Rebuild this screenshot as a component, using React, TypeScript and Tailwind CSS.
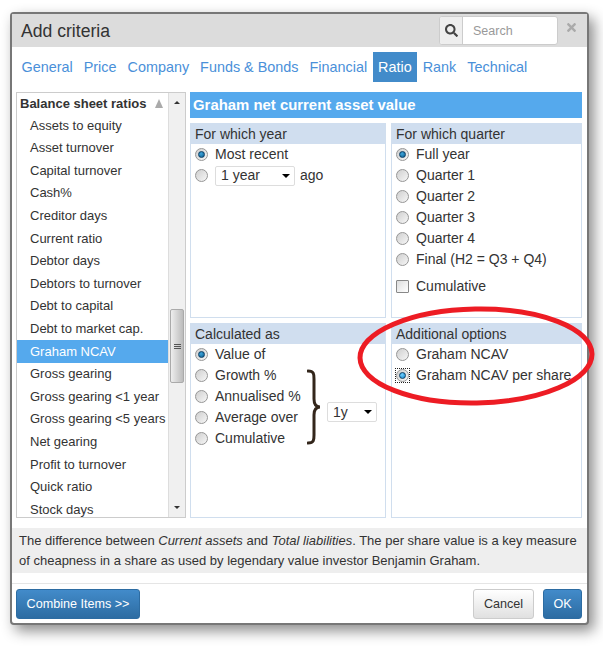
import React from "react";
import { FaSearch, FaTimes } from "react-icons/fa";

const tabs = ["General", "Price", "Company", "Funds & Bonds", "Financial", "Ratio", "Rank", "Technical"];
const items = [
  "Assets to equity",
  "Asset turnover",
  "Capital turnover",
  "Cash%",
  "Creditor days",
  "Current ratio",
  "Debtor days",
  "Debtors to turnover",
  "Debt to capital",
  "Debt to market cap.",
  "Graham NCAV",
  "Gross gearing",
  "Gross gearing <1 year",
  "Gross gearing <5 years",
  "Net gearing",
  "Profit to turnover",
  "Quick ratio",
  "Stock days",
];

const Radio = ({ on, focus }: { on?: boolean; focus?: boolean }) => (
  <span className={"flex h-[13px] w-[13px] shrink-0 " + (focus ? "outline-1 outline-dotted outline-[#222]" : "")}>
    <span className="flex h-[13px] w-[13px] items-center justify-center rounded-full border border-[#969696] bg-[linear-gradient(135deg,#cfcfcf,#f6f6f6)]">
      {on && (
        <span
          className={
            "h-[7px] w-[7px] rounded-full border border-[#0b3f66] " +
            (focus
              ? "bg-[radial-gradient(circle_at_40%_35%,#6fd0ff,#1482c8)]"
              : "bg-[radial-gradient(circle_at_40%_35%,#3fa6dc,#0a5a8c)]")
          }
        />
      )}
    </span>
  </span>
);

const Option = ({ label, on, focus }: { label: string; on?: boolean; focus?: boolean }) => (
  <div className="flex h-[21px] items-center gap-[7px] pl-[4px]">
    <Radio on={on} focus={focus} />
    <span>{label}</span>
  </div>
);

const Select = ({ label, width }: { label: string; width: string }) => (
  <div className={"flex h-[20px] items-center justify-between rounded-[2px] border border-[#ddd] bg-white pl-[5px] pr-[2px] " + width}>
    <span>{label}</span>
    <span className="mr-[2px] h-0 w-0 border-x-[4px] border-t-[4px] border-x-transparent border-t-black" />
  </div>
);

const Panel = ({ title, children }: { title: string; children: React.ReactNode }) => (
  <div className="flex h-[195px] flex-col border border-t-0 border-[#d0deee]">
    <div className="flex h-[21px] items-center bg-[#d0deef] pl-[4px] pt-[1px]">{title}</div>
    <div>{children}</div>
  </div>
);

export default function App() {
  return (
    <div className="relative h-[649px] w-[603px] overflow-hidden bg-white pl-[10px] pt-[12px] font-['Liberation_Sans',Arial,sans-serif] text-[14px] text-[#333]">
      <div className="flex h-[613px] w-[579px] flex-col rounded-[4px] border-2 border-[#777] bg-white shadow-[5px_6px_14px_rgba(0,0,0,0.45)]">
        <div className="flex h-[33px] shrink-0 items-center justify-between bg-[#dcdcdc] pl-[9px] pr-[10px]">
          <span className="pt-[1px] text-[17.6px]">Add criteria</span>
          <div className="flex items-center gap-[8px]">
            <div className="flex h-[29px] w-[119px] overflow-hidden rounded-[3px] border border-[#ccc] bg-white">
              <div className="flex w-[23px] items-center justify-center border-r border-[#ccc] bg-[#eee] text-[#444]">
                <FaSearch className="h-[13px] w-[13px]" />
              </div>
              <span className="flex items-center pl-[10px] pt-[1px] text-[12.5px] text-[#999]">Search</span>
            </div>
            <FaTimes className="mb-[7px] h-[13px] w-[11px] text-[#aaa]" />
          </div>
        </div>

        <div className="flex h-[30px] shrink-0 pl-[4px] pt-[5px] text-[#4a90d9]">
          {tabs.map((t) => (
            <span
              key={t}
              className={
                "flex h-[30px] items-center px-[5.5px] pt-[1px] text-[14.4px] " +
                (t === "Ratio" ? "bg-[#428bca] text-white" : "")
              }
            >
              {t}
            </span>
          ))}
        </div>

        <div className="mt-[15px] flex gap-[4px] pl-[4px] pr-[5px]">
          <div className="flex h-[426px] w-[170px] shrink-0 border border-[#ccc] text-[13px]">
            <div className="w-[151px] overflow-hidden">
              <div className="flex h-[21px] items-center justify-between pl-[3px] pr-[5px] font-bold">
                <span>Balance sheet ratios</span>
                <span className="h-0 w-0 border-x-[4.5px] border-b-[9px] border-x-transparent border-b-[#aaa]" />
              </div>
              {items.map((i) => (
                <div
                  key={i}
                  className={
                    "flex h-[22.62px] items-center whitespace-nowrap pl-[13px] " +
                    (i === "Graham NCAV" ? "bg-[#55a9ed] text-white" : "")
                  }
                >
                  {i}
                </div>
              ))}
            </div>
            <div className="relative flex w-[17px] flex-col items-center justify-between border-l border-[#ddd] bg-[#f0f0f0] py-[8px]">
              <span className="h-0 w-0 border-x-[3px] border-b-[3px] border-x-transparent border-b-[#333]" />
              <span className="h-0 w-0 border-x-[3px] border-t-[3px] border-x-transparent border-t-[#333]" />
              <div className="absolute left-[1px] top-[216px] flex h-[74px] w-[14px] flex-col items-center justify-center gap-[1px] rounded-[2px] border border-[#aaa] bg-[linear-gradient(90deg,#eee,#bbb)]">
                <span className="h-px w-[7px] bg-[#555]" />
                <span className="h-px w-[7px] bg-[#555]" />
                <span className="h-px w-[7px] bg-[#555]" />
              </div>
            </div>
          </div>

          <div className="flex w-[392px] flex-col">
            <div className="flex h-[26px] items-center bg-[#55a9ed] pl-[3px] text-[14.9px] font-bold text-white">
              Graham net current asset value
            </div>
            <div className="mt-[5px] grid grid-cols-[196px_191px] gap-x-[5px] gap-y-[5px]">
              <Panel title="For which year">
                <Option label="Most recent" on />
                <div className="flex h-[21px] items-center pl-[4px]">
                  <Radio />
                  <span className="ml-[7px]" />
                  <Select label="1 year" width="w-[80px]" />
                  <span className="ml-[5px]">ago</span>
                </div>
              </Panel>
              <Panel title="For which quarter">
                <Option label="Full year" on />
                <Option label="Quarter 1" />
                <Option label="Quarter 2" />
                <Option label="Quarter 3" />
                <Option label="Quarter 4" />
                <Option label="Final (H2 = Q3 + Q4)" />
                <div className="mt-[6px] flex h-[21px] items-center gap-[7px] pl-[4px]">
                  <span className="h-[13px] w-[13px] rounded-[1px] border border-[#888] bg-[linear-gradient(135deg,#ddd,#fff)]" />
                  <span>Cumulative</span>
                </div>
              </Panel>
              <Panel title="Calculated as">
                <div className="flex">
                  <div className="w-[116px]">
                    <Option label="Value of" on />
                    <Option label="Growth %" />
                    <Option label="Annualised %" />
                    <Option label="Average over" />
                    <Option label="Cumulative" />
                  </div>
                  <div className="mt-[25px] flex h-[76px] items-center gap-[6px]">
                    <svg width="14" height="76" viewBox="0 0 14 76" fill="none" stroke="#33261b" strokeWidth="3" strokeLinecap="round">
                      <path d="M1 2c6 0 6 3 6 8v20c0 5 2 8 6 8-4 0-6 3-6 8v20c0 5 0 8-6 8" />
                    </svg>
                    <div className="mt-[10px]">
                      <Select label="1y" width="w-[50px]" />
                    </div>
                  </div>
                </div>
              </Panel>
              <Panel title="Additional options">
                <Option label="Graham NCAV" />
                <Option label="Graham NCAV per share" on focus />
              </Panel>
            </div>
          </div>
        </div>

        <div className="mt-[10px] h-[45px] bg-[#eee] px-[7px] pt-[3px] text-[13px] leading-[19.5px] text-[#333]">
          The difference between <em>Current assets</em> and <em>Total liabilities</em>. The per share value is a key measure of cheapness in a share as used by legendary value investor Benjamin Graham.
        </div>

        <div className="mt-[10px] flex flex-1 items-start justify-between border-t border-[#e5e5e5] pl-[4px] pr-[5px] pt-[5px] text-[12.6px]">
          <button className="h-[30px] w-[124px] rounded-[3px] border border-[#2d6ca2] bg-[linear-gradient(#428bca,#2d6ca2)] text-white">
            Combine Items &gt;&gt;
          </button>
          <div className="flex gap-[9px]">
            <button className="h-[30px] w-[61px] rounded-[3px] border border-[#ccc] bg-[linear-gradient(#fff,#e0e0e0)]">Cancel</button>
            <button className="h-[30px] w-[39px] rounded-[3px] border border-[#2d6ca2] bg-[linear-gradient(#428bca,#2d6ca2)] text-white">OK</button>
          </div>
        </div>
      </div>

      <svg className="absolute left-0 top-0" width="603" height="649" fill="none">
        <ellipse cx="476" cy="356" rx="116" ry="47" transform="rotate(-1 476 356)" stroke="#ed1c24" strokeWidth="5" />
      </svg>
    </div>
  );
}
